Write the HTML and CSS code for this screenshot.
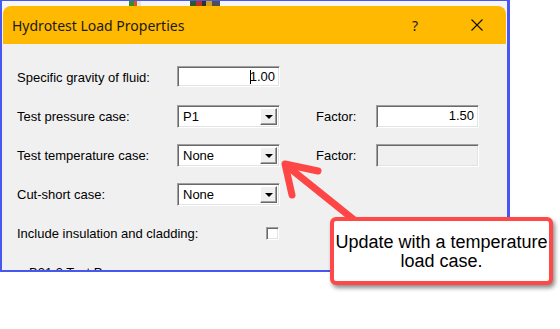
FILE: index.html
```html
<!DOCTYPE html>
<html>
<head>
<meta charset="utf-8">
<link rel="stylesheet" href="styles.css">
</head>
<body>
<div class="stage">
  <div class="frame">
    <div class="topstrip">
      <span class="blip blip-a"></span>
      <span class="blip blip-b"></span>
    </div>
    <div class="titlebar">
      <span class="title">Hydrotest Load Properties</span>
      <span class="help">?</span>
      <svg class="close" width="12" height="12" viewBox="0 0 12 12"><path d="M0.5 0.5 L11.5 11.5 M11.5 0.5 L0.5 11.5" stroke="#111" stroke-width="1.1" fill="none"/></svg>
    </div>
    <div class="body">
      <div class="form">
        <div class="label">Specific gravity of fluid:</div>
        <div class="field short"><span class="caret"></span>1.00</div>
        <div></div><div></div>

        <div class="label">Test pressure case:</div>
        <div class="combo"><span class="value">P1</span><span class="btn"><span class="tri"></span></span></div>
        <div class="label factor">Factor:</div>
        <div class="field">1.50</div>

        <div class="label">Test temperature case:</div>
        <div class="combo"><span class="value">None</span><span class="btn"><span class="tri"></span></span></div>
        <div class="label factor">Factor:</div>
        <div class="field disabled"></div>

        <div class="label">Cut-short case:</div>
        <div class="combo"><span class="value">None</span><span class="btn"><span class="tri"></span></span></div>
        <div></div><div></div>

        <div class="label">Include insulation and cladding:</div>
        <div class="checkcell"><span class="check"></span></div>
        <div></div><div></div>
      </div>
      <div class="group">B31.3 Test Pressure</div>
    </div>
  </div>

  <svg class="arrow" width="560" height="329" viewBox="0 0 560 329">
    <g stroke="#ff4646" stroke-width="7" stroke-linecap="round" stroke-linejoin="round" fill="none">
      <path d="M358 223 L287 166"/>
      <path d="M318 171 L285 164 L292 195"/>
    </g>
  </svg>

  <div class="callout">Update with a temperature<br>load case.</div>
</div>
</body>
</html>
```

FILE: styles.css
```css
html, body {
  margin: 0;
  padding: 0;
  background: #ffffff;
}

.stage {
  position: relative;
  width: 560px;
  height: 329px;
  overflow: hidden;
}

.frame {
  width: 510px;
  height: 272px;
  box-sizing: border-box;
  border: 2px solid #4657f2;
  border-top-width: 1px;
  border-right-width: 3px;
  background: #f4f4f4;
  overflow: hidden;
  display: flex;
  flex-direction: column;
}

.topstrip {
  height: 5px;
  flex-shrink: 0;
  position: relative;
  background: #f6f6f6;
}

.blip {
  position: absolute;
  top: 0;
  height: 5px;
}
.blip-a {
  left: 127px;
  width: 12px;
  background: linear-gradient(90deg, #3a8a2a 0 40%, #d85a1a 40% 70%, #e8e0d0 70%);
}
.blip-b {
  left: 188px;
  width: 30px;
  background: linear-gradient(90deg, #2a5a2a 0 20%, #c03020 20% 40%, #303030 40% 55%, #d0a020 55% 75%, #505050 75%);
}

.titlebar {
  height: 38px;
  flex-shrink: 0;
  margin: 0 1px 0 1px;
  background: #ffb900;
  border-radius: 8px 8px 0 0;
  display: flex;
  align-items: center;
  font-family: "Noto Sans", sans-serif;
  color: #1a1a1a;
}

.title {
  padding-left: 9px;
  font-size: 14px;
  flex: 1;
}

.help {
  font-size: 14px;
  width: 20px;
  text-align: center;
  margin-right: 46px;
}

.close {
  margin-right: 23px;
}

.body {
  flex: 1 0 auto;
  background: #f0f0f0;
  font-family: "Liberation Sans", Arial, sans-serif;
  font-size: 13px;
  color: #000;
  padding: 22px 0 0 15px;
}

.form {
  display: grid;
  grid-template-columns: 160px 103px 96px 103px;
  grid-auto-rows: 23px;
  row-gap: 16px;
  align-items: center;
}

.label {
  white-space: nowrap;
}

.label.factor {
  padding-left: 36px;
}

.field, .combo {
  height: 23px;
  box-sizing: border-box;
  border-style: solid;
  border-width: 1px;
  border-color: #a0a0a0 #ffffff #ffffff #a0a0a0;
  box-shadow: inset 1px 1px 0 #696969, inset -1px -1px 0 #e3e3e3;
  background: #ffffff;
  font-size: 13px;
}

.field {
  text-align: right;
  padding-right: 4px;
  line-height: 20px;
  position: relative;
}

.field.short {
  height: 21px;
  line-height: 19px;
  align-self: start;
}

.caret {
  display: inline-block;
  width: 1px;
  height: 14px;
  background: #000;
  vertical-align: -3px;
  margin-right: -1px;
}

.field.disabled {
  background: #f0f0f0;
}

.combo {
  display: flex;
  align-items: stretch;
  padding: 2px;
}

.value {
  flex: 1;
  padding-left: 3px;
  line-height: 18px;
}

.btn {
  width: 17px;
  box-sizing: border-box;
  background: #f0f0f0;
  border-style: solid;
  border-width: 1px;
  border-color: #ffffff #696969 #696969 #ffffff;
  box-shadow: inset -1px -1px 0 #a0a0a0;
  display: flex;
  align-items: center;
  justify-content: center;
}

.tri {
  width: 0;
  height: 0;
  border-left: 4px solid transparent;
  border-right: 4px solid transparent;
  border-top: 4px solid #000;
  margin-top: 1px;
}

.checkcell {
  display: flex;
  justify-content: flex-end;
  padding-right: 1px;
}

.check {
  width: 13px;
  height: 13px;
  box-sizing: border-box;
  border-style: solid;
  border-width: 1px;
  border-color: #a0a0a0 #ffffff #ffffff #a0a0a0;
  box-shadow: inset 1px 1px 0 #696969, inset -1px -1px 0 #e3e3e3;
  background: #fff;
}

.group {
  margin: 20px 0 0 12px;
  font-size: 13px;
}

.arrow {
  position: absolute;
  left: 0;
  top: 0;
}

.callout {
  position: absolute;
  left: 330px;
  top: 217px;
  width: 223px;
  height: 68px;
  box-sizing: border-box;
  border: 4px solid #ff4848;
  border-radius: 6px;
  background: #ffffff;
  box-shadow: 2px 3px 4px rgba(0, 0, 0, 0.45);
  font-family: "Liberation Sans", Arial, sans-serif;
  font-size: 18px;
  line-height: 19px;
  text-align: center;
  color: #000;
  padding-top: 12px;
}
```
